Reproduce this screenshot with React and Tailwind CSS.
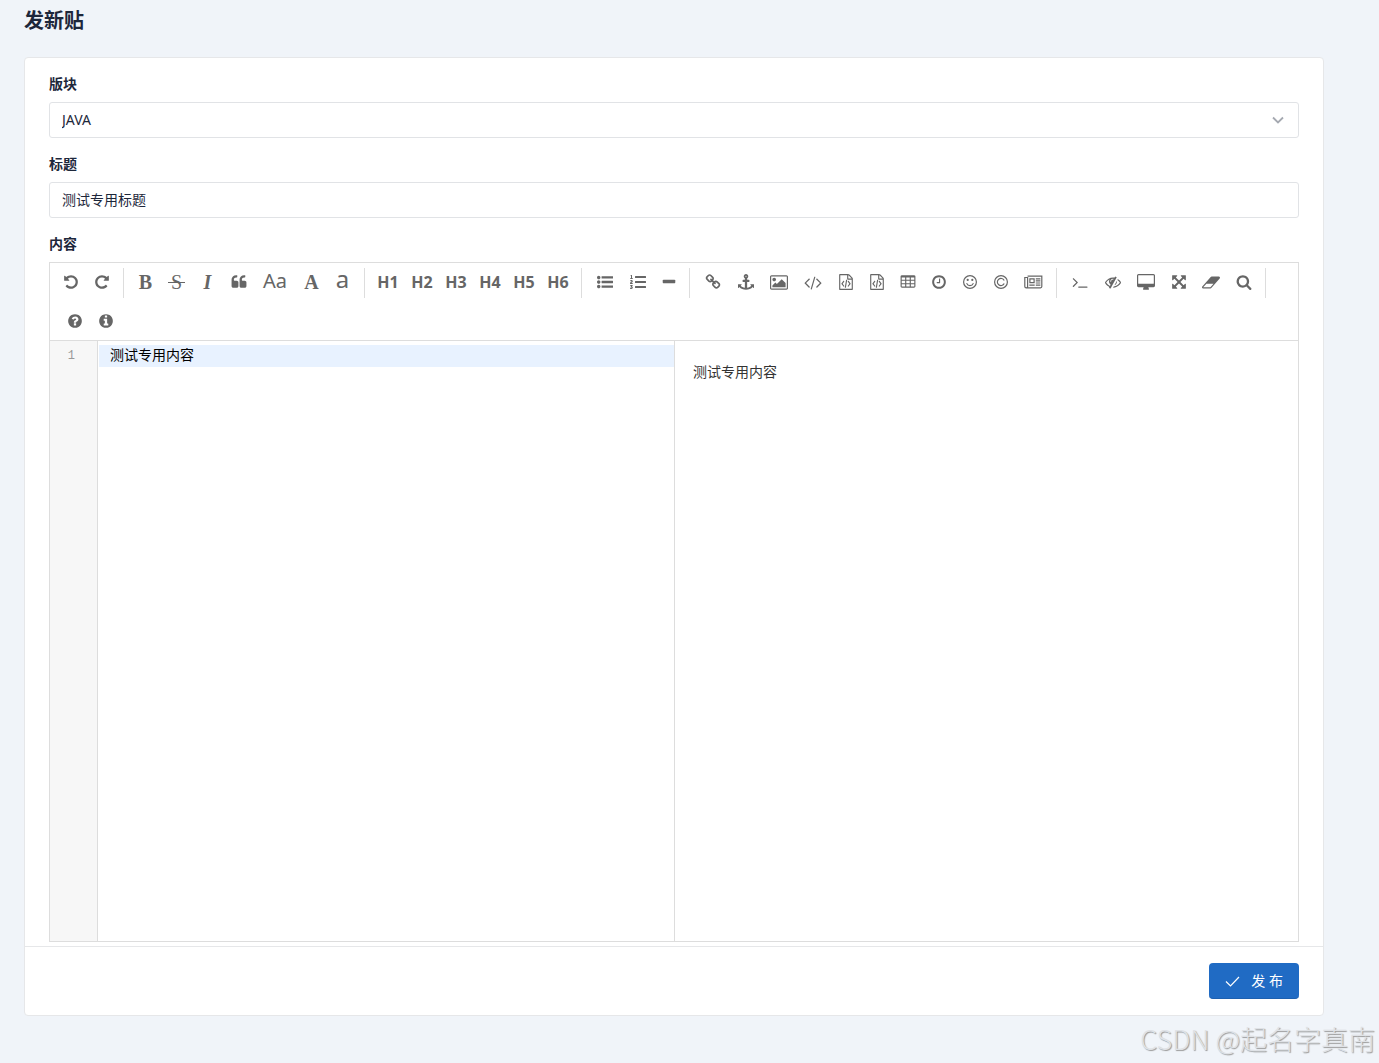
import { useState } from 'react'
import { FaListOl } from 'react-icons/fa'

const ROUND =
  'zm640-480q0 209-103 385.5t-279.5 279.5-385.5 103-385.5-103-279.5-279.5-103-385.5 103-385.5 279.5-279.5 385.5-103 385.5 103 279.5 279.5 103 385.5z'

const paths = {
  undo: 'M1664 896q0 156-61 298t-164 245-245 164-298 61q-172 0-327-72.5t-264-204.5q-7-10-6.5-22.5t8.5-20.5l137-138q10-9 25-9 16 2 23 12 73 95 179 147t225 52q104 0 198.5-40.5t163.5-109.5 109.5-163.5 40.5-198.5-40.5-198.5-109.5-163.5-163.5-109.5-198.5-40.5q-98 0-188 35.5t-160 101.5l137 138q31 30 14 69-17 40-59 40h-448q-26 0-45-19t-19-45v-448q0-42 40-59 39-17 69 14l130 129q107-101 244.5-156.5t284.5-55.5q156 0 298 61t245 164 164 245 61 298z',
  redo: 'M1664 256v448q0 26-19 45t-45 19h-448q-42 0-59-40-17-39 14-69l138-138q-148-137-349-137-104 0-198.5 40.5t-163.5 109.5-109.5 163.5-40.5 198.5 40.5 198.5 109.5 163.5 163.5 109.5 198.5 40.5q119 0 225-52t179-147q7-10 23-12 15 0 25 9l137 138q9 8 9.5 20.5t-7.5 22.5q-109 132-264 204.5t-327 72.5q-156 0-298-61t-245-164-164-245-61-298 61-298 164-245 245-164 298-61q147 0 284.5 55.5t244.5 156.5l130-129q29-31 70-14 39 17 39 59z',
  quote: 'M832 960v384q0 80-56 136t-136 56h-384q-80 0-136-56t-56-136v-704q0-104 40.5-198.5t109.5-163.5 163.5-109.5 198.5-40.5h64q26 0 45 19t19 45v128q0 26-19 45t-45 19h-64q-106 0-181 75t-75 181v32q0 40 28 68t68 28h224q80 0 136 56t56 136zm896 0v384q0 80-56 136t-136 56h-384q-80 0-136-56t-56-136v-704q0-104 40.5-198.5t109.5-163.5 163.5-109.5 198.5-40.5h64q26 0 45 19t19 45v128q0 26-19 45t-45 19h-64q-106 0-181 75t-75 181v32q0 40 28 68t68 28h224q80 0 136 56t56 136z',
  list: 'M384 1408q0 80-56 136t-136 56-136-56-56-136 56-136 136-56 136 56 56 136zm0-512q0 80-56 136t-136 56-136-56-56-136 56-136 136-56 136 56 56 136zm1408 416v192q0 13-9.5 22.5t-22.5 9.5h-1216q-13 0-22.5-9.5t-9.5-22.5v-192q0-13 9.5-22.5t22.5-9.5h1216q13 0 22.5 9.5t9.5 22.5zm-1408-928q0 80-56 136t-136 56-136-56-56-136 56-136 136-56 136 56 56 136zm1408 416v192q0 13-9.5 22.5t-22.5 9.5h-1216q-13 0-22.5-9.5t-9.5-22.5v-192q0-13 9.5-22.5t22.5-9.5h1216q13 0 22.5 9.5t9.5 22.5zm0-512v192q0 13-9.5 22.5t-22.5 9.5h-1216q-13 0-22.5-9.5t-9.5-22.5v-192q0-13 9.5-22.5t22.5-9.5h1216q13 0 22.5 9.5t9.5 22.5z',
  minus: 'M1600 736v192q0 40-28 68t-68 28h-1216q-40 0-68-28t-28-68v-192q0-40 28-68t68-28h1216q40 0 68 28t28 68z',
  link: 'M1520 1216q0-40-28-68l-208-208q-28-28-68-28-42 0-72 32 3 3 19 18.5t21.5 21.5 15 19 13 25.5 3.5 27.5q0 40-28 68t-68 28q-15 0-27.5-3.5t-25.5-13-19-15-21.5-21.5-18.5-19q-33 31-33 73 0 40 28 68l206 207q27 27 68 27 40 0 68-26l147-146q28-28 28-67zm-703-705q0-40-28-68l-206-207q-28-28-68-28-39 0-68 27l-147 146q-28 28-28 67 0 40 28 68l208 208q27 27 68 27 42 0 72-31-3-3-19-18.5t-21.5-21.5-15-19-13-25.5-3.5-27.5q0-40 28-68t68-28q15 0 27.5 3.5t25.5 13 19 15 21.5 21.5 18.5 19q33-31 33-73zm895 705q0 120-85 203l-147 146q-83 83-203 83-121 0-204-85l-206-207q-83-83-83-203 0-123 88-209l-88-88q-86 88-208 88-120 0-204-84l-208-208q-84-84-84-204t85-203l147-146q83-83 203-83 121 0 204 85l206 207q83 83 83 203 0 123-88 209l88 88q86-88 208-88 120 0 204 84l208 208q84 84 84 204z',
  anchor: 'M960 256q0-26-19-45t-45-19-45 19-19 45 19 45 45 19 45-19 19-45zm832 928v352q0 22-20 30-8 2-12 2-12 0-23-9l-93-93q-119 143-318.5 226.5t-429.5 83.5-429.5-83.5-318.5-226.5l-93 93q-9 9-23 9-4 0-12-2-20-8-20-30v-352q0-14 9-23t23-9h352q22 0 30 20 8 19-7 35l-100 100q67 91 189.5 153.5t271.5 82.5v-647h-192q-26 0-45-19t-19-45v-128q0-26 19-45t45-19h192v-163q-58-34-93-92.5t-35-128.5q0-106 75-181t181-75 181 75 75 181q0 70-35 128.5t-93 92.5v163h192q26 0 45 19t19 45v128q0 26-19 45t-45 19h-192v647q149-20 271.5-82.5t189.5-153.5l-100-100q-15-16-7-35 8-20 30-20h352q14 0 23 9t9 23z',
  image: 'M576 576q0 80-56 136t-136 56-136-56-56-136 56-136 136-56 136 56 56 136zm1024 384v448h-1408v-192l320-320 160 160 512-512zm96-704h-1600q-13 0-22.5 9.5t-9.5 22.5v1216q0 13 9.5 22.5t22.5 9.5h1600q13 0 22.5-9.5t9.5-22.5v-1216q0-13-9.5-22.5t-22.5-9.5zm160 32v1216q0 66-47 113t-113 47h-1600q-66 0-113-47t-47-113v-1216q0-66 47-113t113-47h1600q66 0 113 47t47 113z',
  code: 'M553 1399l-50 50q-10 10-23 10t-23-10l-466-466q-10-10-10-23t10-23l466-466q10-10 23-10t23 10l50 50q10 10 10 23t-10 23l-393 393 393 393q10 10 10 23t-10 23zm591-1067l-373 1291q-4 13-15.5 19.5t-23.5 2.5l-62-17q-13-4-19.5-15.5t-2.5-24.5l373-1291q4-13 15.5-19.5t23.5-2.5l62 17q13 4 19.5 15.5t2.5 24.5zm657 651l-466 466q-10 10-23 10t-23-10l-50-50q-10-10-10-23t10-23l393-393-393-393q-10-10-10-23t10-23l50-50q10-10 23-10t23 10l466 466q10 10 10 23t-10 23z',
  file: 'M1596 380q28 28 48 76t20 88v1152q0 40-28 68t-68 28h-1344q-40 0-68-28t-28-68v-1600q0-40 28-68t68-28h896q40 0 88 20t76 48zm-444-244v376h376q-10-29-22-41l-313-313q-12-12-41-22zm384 1528v-1024h-416q-40 0-68-28t-28-68v-416h-768v1536h1280zm-928-896q8-11 21-12.5t24 6.5l51 38q11 8 12.5 21t-6.5 24l-182 243 182 243q8 11 6.5 24t-12.5 21l-51 38q-11 8-24 6.5t-21-12.5l-226-301q-14-19 0-38zm802 301q14 19 0 38l-226 301q-8 11-21 12.5t-24-6.5l-51-38q-11-8-12.5-21t6.5-24l182-243-182-243q-8-11-6.5-24t12.5-21l51-38q11-8 24-6.5t21 12.5zm-620 461q-13-2-20.5-13t-5.5-24l138-831q2-13 13-20.5t24-5.5l63 10q13 2 20.5 13t5.5 24l-138 831q-2 13-13 20.5t-24 5.5z',
  table:
    'M224 128h1344q66 0 113 47t47 113v1088q0 66-47 113t-113 47h-1344q-66 0-113-47t-47-113v-1088q0-66 47-113t113-47zM192 384v256h384v-256zM704 384v256h384v-256zM1216 384v256h384v-256zM192 768v256h384v-256zM704 768v256h384v-256zM1216 768v256h384v-256zM192 1152v256h384v-256zM704 1152v256h384v-256zM1216 1152v256h384v-256z',
  clock: 'M1024 544v448q0 14-9 23t-23 9h-320q-14 0-23-9t-9-23v-64q0-14 9-23t23-9h224v-352q0-14 9-23t23-9h64q14 0 23 9t9 23zm416 352q0-148-73-273t-198-198-273-73-273 73-198 198-73 273 73 273 198 198 273 73 273-73 198-198 73-273zm224 0q0 209-103 385.5t-279.5 279.5-385.5 103-385.5-103-279.5-279.5-103-385.5 103-385.5 279.5-279.5 385.5-103 385.5 103 279.5 279.5 103 385.5z',
  terminal: 'M649 983l-466 466q-10 10-23 10t-23-10l-50-50q-10-10-10-23t10-23l393-393-393-393q-10-10-10-23t10-23l50-50q10-10 23-10t23 10l466 466q10 10 10 23t-10 23zm1079 457v64q0 14-9 23t-23 9h-960q-14 0-23-9t-9-23v-64q0-14 9-23t23-9h960q14 0 23 9t9 23z',
  eye: 'M555 1335l78-141q-87-63-136-159t-49-203q0-121 61-225-229 117-381 353 167 258 427 375zm389-759q0-20-14-34t-34-14q-125 0-214.5 89.5t-89.5 214.5q0 20 14 34t34 14 34-14 14-34q0-86 61-147t147-61q20 0 34-14t14-34zm363-191q0 7-1 9-106 189-316 567t-315 566l-49 89q-10 16-28 16-12 0-134-70-16-10-16-28 0-12 44-87-143-65-263.5-173t-208.5-245q-20-31-20-69t20-69q153-235 380-371t496-136q89 0 180 17l54-97q10-16 28-16 5 0 18 6t31 15.5 33 18.5 31.5 18.5 19.5 11.5q16 10 16 27zm37 447q0 139-79 253.5t-209 164.5l280-502q8 45 8 84zm448 128q0 35-20 69-39 64-109 145-150 172-347.5 267t-419.5 95l74-132q212-18 392.5-137t301.5-307q-115-179-282-294l63-112q95 64 182.5 153t144.5 184q20 34 20 69z',
  desktop: 'M1728 992v-832q0-13-9.5-22.5t-22.5-9.5h-1600q-13 0-22.5 9.5t-9.5 22.5v832q0 13 9.5 22.5t22.5 9.5h1600q13 0 22.5-9.5t9.5-22.5zm128-832v1088q0 66-47 113t-113 47h-544q0 37 16 77.5t32 71 16 43.5q0 26-19 45t-45 19h-512q-26 0-45-19t-19-45q0-14 16-44t32-70 16-78h-544q-66 0-113-47t-47-113v-1088q0-66 47-113t113-47h1600q66 0 113 47t47 113z',
  expand: 'M1411 541l-355 355 355 355 144-144q29-31 70-14 39 17 39 59v448q0 26-19 45t-45 19h-448q-42 0-59-40-17-39 14-69l144-144-355-355-355 355 144 144q31 30 14 69-17 40-59 40h-448q-26 0-45-19t-19-45v-448q0-42 40-59 39-17 69 14l144 144 355-355-355-355-144 144q-19 19-45 19-12 0-24-5-40-17-40-59v-448q0-26 19-45t45-19h448q42 0 59 40 17 39-14 69l-144 144 355 355 355-355-144-144q-31-30-14-69 17-40 59-40h448q26 0 45 19t19 45v448q0 42-39 59-13 5-25 5-26 0-45-19z',
  eraser: 'M960 1408l336-384h-768l-336 384h768zm1013-1077q15 34 9.5 71.5t-30.5 65.5l-896 1024q-38 44-96 44h-768q-38 0-69.5-20.5t-47.5-54.5q-15-34-9.5-71.5t30.5-65.5l896-1024q38-44 96-44h768q38 0 69.5 20.5t47.5 54.5z',
  search: 'M1216 832q0-185-131.5-316.5t-316.5-131.5-316.5 131.5-131.5 316.5 131.5 316.5 316.5 131.5 316.5-131.5 131.5-316.5zm512 832q0 52-38 90t-90 38q-54 0-90-38l-343-342q-179 124-399 124-143 0-273.5-55.5t-225-150-150-225-55.5-273.5 55.5-273.5 150-225 225-150 273.5-55.5 273.5 55.5 225 150 150 225 55.5 273.5q0 220-124 399l343 343q37 37 37 90z',
  help:
    'M1280 704q0-88-55.5-163t-138.5-116-170-41q-243 0-371 213-15 24 8 42l132 100q7 6 19 6 16 0 25-12 53-68 86-92 34-24 86-24 48 0 85.5 26t37.5 59q0 38-20 61t-68 45q-63 28-115.5 86.5t-52.5 125.5v36q0 14 9 23t23 9h192q14 0 23-9t9-23q0-19 21.5-49.5t54.5-49.5q32-18 49-28.5t46-35 44.5-48 28-60.5 12.5-81zM1024 1376v-192q0-14-9-23t-23-9h-192q-14 0-23 9t-9 23v192q0 14 9 23t23 9h192q14 0 23-9t9-23' +
    ROUND,
  info:
    'M1024 480v-160q0-14-9-23t-23-9h-192q-14 0-23 9t-9 23v160q0 14 9 23t23 9h192q14 0 23-9t9-23zM1024 1376m128 0v-160q0-14-9-23t-23-9h-96v-512q0-14-9-23t-23-9h-320q-14 0-23 9t-9 23v160q0 14 9 23t23 9h96v320h-96q-14 0-23 9t-9 23v160q0 14 9 23t23 9h448q14 0 23-9t9-23zM1024 1376' +
    ROUND,
}

// Some glyphs are wider than the 1792 unit em square
const wide = { image: '-64 0 1920 1792', code: '-64 0 1920 1792', desktop: '-64 0 1920 1792', eraser: '64 0 1920 1792' }

function Icon({ name }) {
  return (
    <svg
      viewBox={wide[name] || '0 0 1792 1792'}
      className={wide[name] ? 'h-[17px] w-[18px]' : 'h-4 w-4'}
      fill="currentColor"
      fillRule="evenodd"
      aria-hidden="true"
    >
      <path d={paths[name]} />
    </svg>
  )
}

function SmileIcon() {
  return (
    <svg viewBox="0 0 16 16" className="h-4 w-4" fill="none" stroke="currentColor" strokeWidth="1.2" aria-hidden="true">
      <circle cx="8" cy="8" r="6.4" />
      <path d="M4.9 9.6c.9 2.7 5.3 2.7 6.2 0" strokeLinecap="round" />
      <circle cx="5.7" cy="5.9" r="1.1" fill="currentColor" stroke="none" />
      <circle cx="10.3" cy="5.9" r="1.1" fill="currentColor" stroke="none" />
    </svg>
  )
}

function CopyrightIcon() {
  return (
    <svg viewBox="0 0 16 16" className="h-4 w-4" fill="none" stroke="currentColor" strokeWidth="1.2" aria-hidden="true">
      <circle cx="8" cy="8" r="6.4" />
      <path d="M11.2 6.4A3.6 3.6 0 1 0 11.2 9.6" />
    </svg>
  )
}

function NewsIcon() {
  return (
    <svg viewBox="0 0 19 16" className="h-4 w-[19px]" fill="none" stroke="currentColor" strokeWidth="1.2" aria-hidden="true">
      <path d="M3.6 2.2h14.2v10.4a1.2 1.2 0 0 1-1.2 1.2H2.2A1.4 1.4 0 0 1 .8 12.4V3.5h2.8v9a1.3 1.3 0 0 1-1.4 1.3" />
      <path d="M5.9 4.8h4.2v3.8h-4.2zM5.3 11.2h5.4M11.8 4.8h4.6M11.8 6.9h4.6M11.8 9h4.6M11.8 11.2h4.6" />
    </svg>
  )
}

// The bar reaches past both sides of the letter
function StrikeLabel() {
  return (
    <span className="bg-[linear-gradient(#666,#666)] bg-[length:100%_1px] bg-center bg-no-repeat px-[3px]">S</span>
  )
}

const W31 = 'w-[31px]'
const W33 = 'w-[33px]'
const W34 = 'w-[34px]'
const SERIF = 'font-["Liberation_Serif"] text-xl'
const heading = (n) => ({ label: `H${n}`, width: W34, text: `H${n}`, font: 'text-base font-bold' })

const groups = [
  [
    { label: '撤销', width: W31, icon: 'undo' },
    { label: '重做', width: W31, icon: 'redo' },
  ],
  [
    { label: '粗体', width: W31, text: 'B', font: `${SERIF} font-bold` },
    { label: '删除线', width: W31, node: <StrikeLabel />, font: SERIF },
    { label: '斜体', width: W31, text: 'I', font: `${SERIF} font-bold italic` },
    { label: '引用', width: W31, icon: 'quote' },
    { label: '首字母大写', width: 'w-[42px]', text: 'Aa', font: 'pb-0.5 text-xl' },
    { label: '转大写', width: W31, text: 'A', font: `${SERIF} font-bold` },
    { label: '转小写', width: W31, text: 'a', font: 'pb-1.5 text-2xl' },
  ],
  [1, 2, 3, 4, 5, 6].map(heading),
  [
    { label: '无序列表', width: W33, icon: 'list' },
    { label: '有序列表', width: W33, node: <FaListOl className="h-4 w-4" /> },
    { label: '横线', width: 'w-[29px]', icon: 'minus' },
  ],
  [
    { label: '链接', width: W33, icon: 'link' },
    { label: '引用链接', width: W33, icon: 'anchor' },
    { label: '图片', width: W34, icon: 'image' },
    { label: '行内代码', width: W34, icon: 'code' },
    { label: '预格式文本', width: W31, icon: 'file' },
    { label: '代码块', width: W31, icon: 'file' },
    { label: '表格', width: W31, icon: 'table' },
    { label: '日期时间', width: W31, icon: 'clock' },
    { label: '表情', width: W31, node: <SmileIcon /> },
    { label: 'HTML 实体字符', width: W31, node: <CopyrightIcon /> },
    { label: '分页符', width: W34, node: <NewsIcon /> },
  ],
  [
    { label: '跳转到行', width: W33, icon: 'terminal' },
    { label: '关闭实时预览', width: W33, icon: 'eye' },
    { label: '全窗口预览', width: W34, icon: 'desktop' },
    { label: '全屏', width: W31, icon: 'expand' },
    { label: '清空', width: W34, icon: 'eraser' },
    { label: '搜索', width: W31, icon: 'search' },
  ],
]

const helpTools = [
  { label: '使用帮助', width: W31, icon: 'help' },
  { label: '关于', width: W31, icon: 'info' },
]

function ToolButton({ tool }) {
  return (
    <button
      type="button"
      title={tool.label}
      aria-label={tool.label}
      className={`flex h-[38px] items-center justify-center leading-none hover:bg-gray-50 ${tool.width} ${tool.font || ''}`}
    >
      {tool.icon ? <Icon name={tool.icon} /> : tool.node || tool.text}
    </button>
  )
}

function Toolbar() {
  return (
    <div className="flex flex-wrap border-b border-[#ddd] pl-[5px] text-[#666]">
      {groups.map((group, i) => (
        <div key={i} className="flex h-[39px]">
          {group.map((tool) => (
            <ToolButton key={tool.label} tool={tool} />
          ))}
          <div className="mx-1.5 mt-[5px] h-[30px] w-px bg-[#ddd]" />
        </div>
      ))}
      <div className="flex pl-1">
        {helpTools.map((tool) => (
          <ToolButton key={tool.label} tool={tool} />
        ))}
      </div>
    </div>
  )
}

export default function App() {
  const [board, setBoard] = useState('JAVA')
  const [title, setTitle] = useState('测试专用标题')
  const [content, setContent] = useState('测试专用内容')

  return (
    <div className='relative min-h-screen bg-[#f0f4f9] pr-[55px] pl-6 font-["Noto_Sans","Noto_Sans_CJK_SC",sans-serif] text-sm text-[#1d273b]'>
      <h1 className="pt-[7px] text-xl leading-7 font-bold">发新贴</h1>

      <form className="mt-[22px] rounded border border-[#e6e7e9] bg-white" onSubmit={(e) => e.preventDefault()}>
        <div className="px-6 pt-4 pb-1">
          <label htmlFor="board" className="mb-2 block leading-5 font-semibold">
            版块
          </label>
          <div className="relative mb-4">
            <select
              id="board"
              value={board}
              onChange={(e) => setBoard(e.target.value)}
              className="block h-9 w-full appearance-none rounded-[3px] border border-[#e1e3e6] bg-white px-3"
            >
              <option>JAVA</option>
              <option>C++</option>
              <option>前端</option>
            </select>
            <svg
              viewBox="0 0 16 16"
              className="pointer-events-none absolute top-2.5 right-[13px] h-4 w-4 text-[#a5a9b1]"
              fill="none"
              stroke="currentColor"
              strokeWidth="1.8"
              aria-hidden="true"
            >
              <path d="M3 5.5l5 5 5-5" />
            </svg>
          </div>

          <label htmlFor="title" className="mb-2 block leading-5 font-semibold">
            标题
          </label>
          <input
            id="title"
            type="text"
            value={title}
            onChange={(e) => setTitle(e.target.value)}
            className="mb-4 block h-9 w-full rounded-[3px] border border-[#e1e3e6] bg-white px-3 pb-0.5"
          />

          <label htmlFor="content" className="mb-2 block leading-5 font-semibold">
            内容
          </label>
          <div className="border border-[#ddd]">
            <Toolbar />
            <div className="grid h-[600px] grid-cols-2">
              <div className="flex min-w-0">
                <div className='w-12 shrink-0 border-r border-[#ddd] bg-[#f7f7f7] pt-1 pr-[22px] text-right font-["Liberation_Mono"] text-xs leading-[22px] text-[#999]'>
                  1
                </div>
                <textarea
                  id="content"
                  value={content}
                  onChange={(e) => setContent(e.target.value)}
                  className="mt-1 ml-px min-w-0 flex-1 resize-none bg-[linear-gradient(#e8f2ff_22px,transparent_22px)] pl-[11px] leading-5 text-black outline-none"
                />
              </div>
              <div className="border-l border-[#ddd] px-[18px] py-5 leading-[22px] text-[#333]">
                <p>{content}</p>
              </div>
            </div>
          </div>
        </div>

        {/* Footer */}
        <div className="flex justify-end border-t border-[#e6e7e9] px-6 py-4">
          <button
            type="submit"
            className="flex h-9 items-center gap-2.5 rounded border-b border-[#1d60b0] bg-[#206bc4] px-4 text-white hover:bg-[#1d60b0]"
          >
            <svg viewBox="0 0 16 16" className="h-4 w-4" fill="none" stroke="currentColor" strokeWidth="1.2" aria-hidden="true">
              <path d="M1 8.5l4.5 4.5L14 4" />
            </svg>
            发 布
          </button>
        </div>
      </form>

      <p className='absolute right-1 bottom-1 font-["Noto_Sans_CJK_SC",sans-serif] text-[27px] leading-10 font-light text-[#dfe2e6] [text-shadow:1px_1px_1px_#999]'>
        CSDN @起名字真南
      </p>
    </div>
  )
}
